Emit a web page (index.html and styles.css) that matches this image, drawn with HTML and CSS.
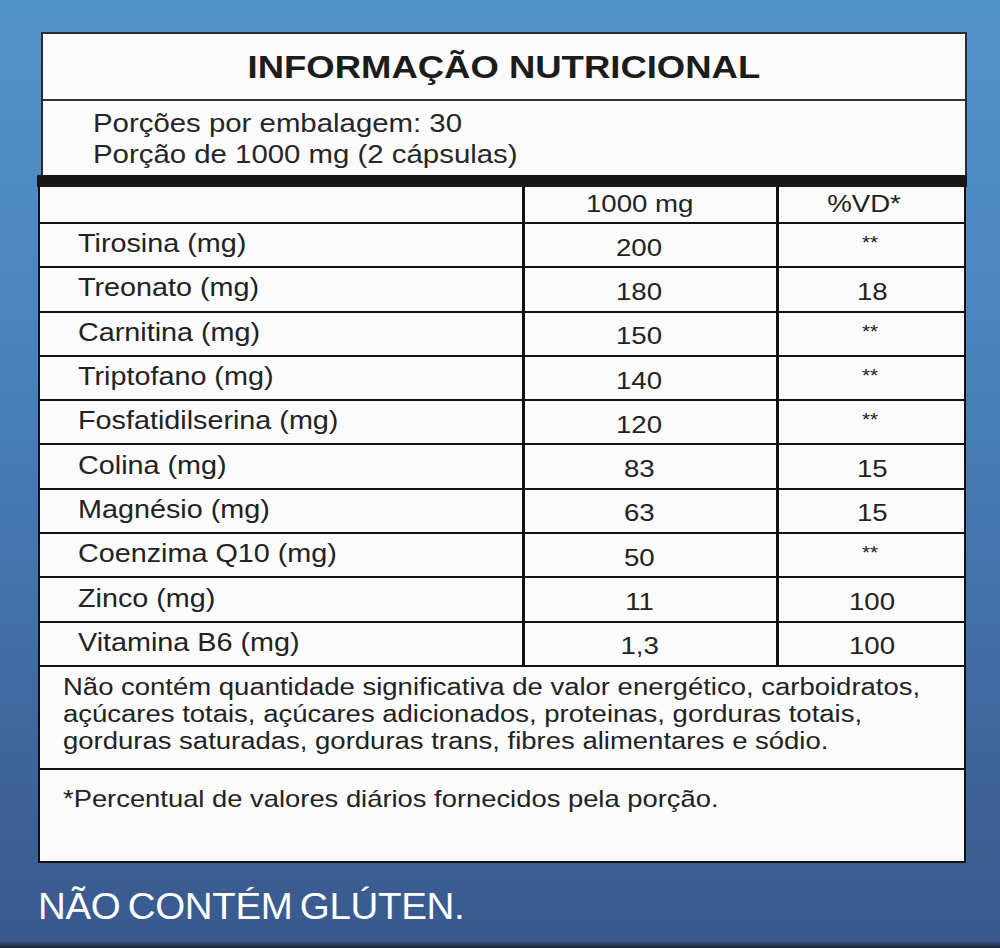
FILE: index.html
```html
<!DOCTYPE html>
<html lang="pt">
<head>
<meta charset="utf-8">
<title>Informação Nutricional</title>
<link rel="stylesheet" href="styles.css">
</head>
<body>
<main class="page">
  <section class="head-box">
    <h1 class="title"><span class="sx mid">INFORMAÇÃO NUTRICIONAL</span></h1>
    <div class="portion">
      <p><span class="sx">Porções por embalagem: 30</span></p>
      <p><span class="sx">Porção de 1000 mg (2 cápsulas)</span></p>
    </div>
  </section>
  <div class="bar"></div>
  <section class="table-box">
    <div class="grid">
      <div class="cell label head"></div>
      <div class="cell val head"><span class="sx mid">1000 mg</span></div>
      <div class="cell vd head"><span class="sx mid">%VD*</span></div>

      <div class="cell label"><span class="sx">Tirosina (mg)</span></div><div class="cell val"><span class="sx mid">200</span></div><div class="cell vd star"><span class="sx mid">**</span></div>
      <div class="cell label"><span class="sx">Treonato (mg)</span></div><div class="cell val"><span class="sx mid">180</span></div><div class="cell vd"><span class="sx mid">18</span></div>
      <div class="cell label"><span class="sx">Carnitina (mg)</span></div><div class="cell val"><span class="sx mid">150</span></div><div class="cell vd star"><span class="sx mid">**</span></div>
      <div class="cell label"><span class="sx">Triptofano (mg)</span></div><div class="cell val"><span class="sx mid">140</span></div><div class="cell vd star"><span class="sx mid">**</span></div>
      <div class="cell label"><span class="sx">Fosfatidilserina (mg)</span></div><div class="cell val"><span class="sx mid">120</span></div><div class="cell vd star"><span class="sx mid">**</span></div>
      <div class="cell label"><span class="sx">Colina (mg)</span></div><div class="cell val"><span class="sx mid">83</span></div><div class="cell vd"><span class="sx mid">15</span></div>
      <div class="cell label"><span class="sx">Magnésio (mg)</span></div><div class="cell val"><span class="sx mid">63</span></div><div class="cell vd"><span class="sx mid">15</span></div>
      <div class="cell label"><span class="sx">Coenzima Q10 (mg)</span></div><div class="cell val"><span class="sx mid">50</span></div><div class="cell vd star"><span class="sx mid">**</span></div>
      <div class="cell label"><span class="sx">Zinco (mg)</span></div><div class="cell val"><span class="sx mid">11</span></div><div class="cell vd"><span class="sx mid">100</span></div>
      <div class="cell label"><span class="sx">Vitamina B6 (mg)</span></div><div class="cell val"><span class="sx mid">1,3</span></div><div class="cell vd"><span class="sx mid">100</span></div>
    </div>
    <div class="note">
      <span class="line">Não contém quantidade significativa de valor energético, carboidratos,</span>
      <span class="line">açúcares totais, açúcares adicionados, proteinas, gorduras totais,</span>
      <span class="line">gorduras saturadas, gorduras trans, fibres alimentares e sódio.</span>
    </div>
    <div class="footnote"><span class="sx">*Percentual de valores diários fornecidos pela porção.</span></div>
  </section>
  <p class="gluten"><span class="gl">NÃO CONTÉM GLÚTEN.</span></p>
</main>
</body>
</html>
```

FILE: styles.css
```css
* { box-sizing: border-box; }
html, body { margin: 0; padding: 0; }
body {
  width: 1000px;
  height: 948px;
  overflow: hidden;
  background: linear-gradient(180deg, #5292cd 0%, #4c86c1 30%, #4270a8 65%, #3b5e93 90%, #3a5a8e 99.2%, #1a2235 100%);
  font-family: "Liberation Sans", Arial, sans-serif;
  color: #1e1e1e;
}
.page {
  padding: 32px 0 0 37px;
  width: 970px;
}
.sx {
  display: inline-block;
  transform: scaleX(1.15);
  transform-origin: left center;
  white-space: nowrap;
}
.sx.mid { transform-origin: center center; }
.head-box {
  margin-left: 4px;
  width: 926px;
  background: #fbfbfb;
  border: 2px solid #2b2b2b;
  border-bottom: none;
}
.title {
  margin: 0;
  height: 67px;
  border-bottom: 2px solid #333;
  font-size: 32px;
  font-weight: bold;
  text-align: center;
  line-height: 66px;
  color: #1c1c1c;
}
.title .sx { transform: scaleX(1.14); }
.portion {
  height: 74px;
  padding: 7px 0 0 50px;
}
.portion p {
  margin: 0;
  font-size: 25px;
  line-height: 31px;
  color: #262626;
}
.portion .sx { transform: scaleX(1.175); }
.bar {
  height: 12px;
  width: 930px;
  background: #1b1717;
}
.table-box {
  width: 928px;
  margin-left: 1px;
  background: #fbfbfb;
  border: 2px solid #111;
  border-top: none;
}
.grid {
  display: grid;
  grid-template-columns: 485px 254px 187px;
  grid-template-rows: 37px repeat(10, 44.3px);
}
.cell {
  font-size: 24px;
  color: #222;
  border-bottom: 2px solid #111;
  display: flex;
  align-items: center;
}
.label {
  font-size: 25px;
  padding-left: 38px;
  border-right: 3px solid #111;
  padding-bottom: 3px;
}
.val {
  justify-content: center;
  border-right: 3px solid #111;
  padding-right: 22px;
  padding-top: 5px;
}
.vd {
  justify-content: center;
  padding-right: 0;
  padding-top: 5px;
}
.head { padding-top: 0; padding-bottom: 2px; }
.vd.head { padding-right: 16px; }
.star { font-size: 18px; align-items: flex-start; padding-top: 9px; padding-right: 4px; }
.note {
  padding: 7px 0 12px 23px;
  font-size: 23px;
  line-height: 27px;
  color: #222;
  height: 103px;
  border-bottom: 2px solid #111;
}
.note .line {
  display: block;
  width: max-content;
  white-space: nowrap;
  transform: scaleX(1.195);
  transform-origin: left center;
}
.footnote {
  height: 91px;
  padding: 15px 0 0 23px;
  font-size: 24px;
  color: #222;
}
.footnote .sx { transform: scaleX(1.14); }
.gluten {
  margin: 22px 0 0 1px;
  font-size: 37px;
  line-height: 44px;
  color: #fff;
}
.gl {
  display: inline-block;
  letter-spacing: -0.3px;
  word-spacing: -3px;
  transform: scaleX(1.04);
  transform-origin: left center;
}
```
